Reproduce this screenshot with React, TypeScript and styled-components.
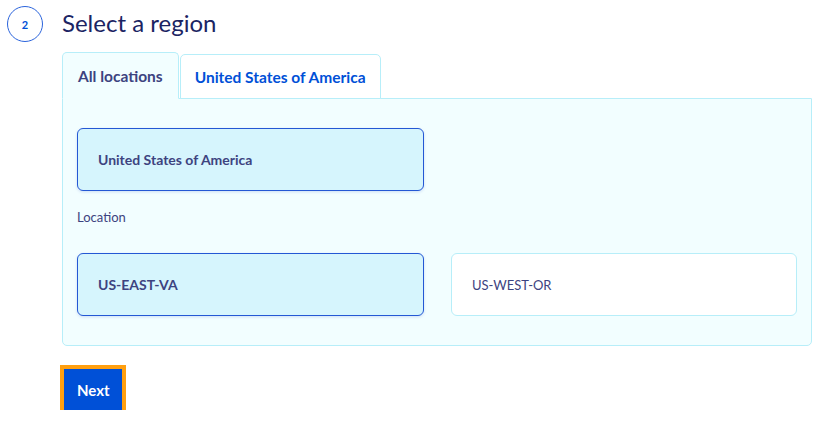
import React, { useState } from 'react';
import styled, { createGlobalStyle } from 'styled-components';

const BLUE = '#0050d7';
const NAVY = '#1b2463';
const TEXT = '#3d4380';
const CYAN_BORDER = '#b7eef9';
const PANEL_BG = '#f2feff';
const SELECTED_BG = '#d6f5fd';

const GlobalStyle = createGlobalStyle`
  body {
    margin: 0;
    background: #ffffff;
    font-family: 'Source Sans Pro', Lato, 'Open Sans', sans-serif;
  }
`;

const Page = styled.div`
  padding: 6px 25px 0 7px;
`;

const Header = styled.div`
  display: flex;
  align-items: center;
  gap: 19px;
  height: 36px;
`;

const StepBadge = styled.div`
  width: 36px;
  height: 36px;
  box-sizing: border-box;
  border: 1px solid #2b64dc;
  border-radius: 50%;
  display: flex;
  align-items: center;
  justify-content: center;
  color: ${BLUE};
  font-size: 11px;
  font-weight: 700;
`;

const Title = styled.h2`
  margin: -3px 0 0;
  font-size: 24px;
  font-weight: 400;
  color: ${NAVY};
`;

const Body = styled.div`
  margin: 10px 0 0 55px;
`;

const TabList = styled.div`
  display: flex;
  align-items: flex-end;
  gap: 1px;
  height: 46px;
`;

const Tab = styled.button<{ $active: boolean }>`
  font-family: inherit;
  height: ${(p) => (p.$active ? '47px' : '45px')};
  margin-bottom: -1px;
  padding: 0 ${(p) => (p.$active ? '15px' : '14px')};
  border: 1px solid ${CYAN_BORDER};
  border-bottom-color: ${(p) => (p.$active ? PANEL_BG : CYAN_BORDER)};
  border-radius: 5px 5px 0 0;
  background: ${(p) => (p.$active ? PANEL_BG : '#ffffff')};
  color: ${(p) => (p.$active ? TEXT : BLUE)};
  font-size: 15.5px;
  font-weight: 700;
  cursor: pointer;
  position: relative;
  z-index: ${(p) => (p.$active ? 1 : 0)};
`;

const Panel = styled.div`
  width: 720px;
  padding: 29px 14px 29px 14px;
  background: ${PANEL_BG};
  border: 1px solid ${CYAN_BORDER};
  border-radius: 0 0 5px 5px;
`;

const OptionGrid = styled.div`
  display: grid;
  grid-template-columns: 347px 346px;
  column-gap: 27px;
`;

const Option = styled.button<{ $selected: boolean }>`
  font-family: inherit;
  box-sizing: border-box;
  height: 63px;
  padding: 0 20px;
  text-align: left;
  border-radius: 6px;
  border: 1px solid ${(p) => (p.$selected ? '#2458d4' : CYAN_BORDER)};
  background: ${(p) => (p.$selected ? SELECTED_BG : '#ffffff')};
  box-shadow: ${(p) => (p.$selected ? '0 1px 3px rgba(40, 80, 200, 0.18)' : 'none')};
  color: ${TEXT};
  font-size: ${(p) => (p.$selected ? '14px' : '13px')};
  font-weight: ${(p) => (p.$selected ? 700 : 400)};
  cursor: pointer;
`;

const Label = styled.div`
  margin: 18px 0 28px;
  font-size: 13px;
  color: ${TEXT};
`;

const NextButton = styled.button`
  font-family: inherit;
  margin: 23px 0 0 57px;
  padding: 0 13px;
  width: 58px;
  height: 41px;
  background: ${BLUE};
  color: #ffffff;
  font-size: 15px;
  font-weight: 700;
  border: none;
  outline: 4px solid #ff9f10;
  cursor: pointer;
`;

const tabs = ['All locations', 'United States of America'];
const locations = ['US-EAST-VA', 'US-WEST-OR'];

export default function App() {
  const [tab, setTab] = useState(0);
  const [location, setLocation] = useState(0);

  return (
    <Page>
      <GlobalStyle />
      <Header>
        <StepBadge>2</StepBadge>
        <Title>Select a region</Title>
      </Header>
      <Body>
        <TabList>
          {tabs.map((t, i) => (
            <Tab key={t} $active={tab === i} onClick={() => setTab(i)}>
              {t}
            </Tab>
          ))}
        </TabList>
        <Panel>
          <OptionGrid>
            <Option $selected>United States of America</Option>
          </OptionGrid>
          <Label>Location</Label>
          <OptionGrid>
            {locations.map((l, i) => (
              <Option key={l} $selected={location === i} onClick={() => setLocation(i)}>
                {l}
              </Option>
            ))}
          </OptionGrid>
        </Panel>
      </Body>
      <NextButton>Next</NextButton>
    </Page>
  );
}
